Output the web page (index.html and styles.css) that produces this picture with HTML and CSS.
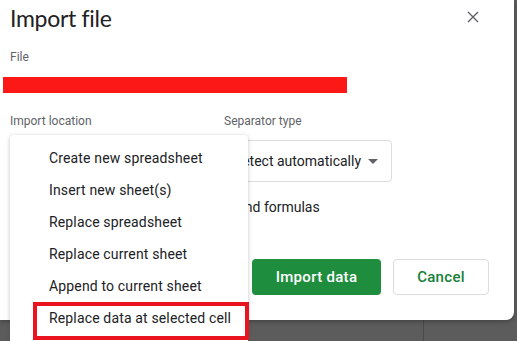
FILE: index.html
```html
<!DOCTYPE html>
<html lang="en">
<head>
    <meta charset="UTF-8">
    <meta name="viewport" content="width=device-width, initial-scale=1.0">
    <title>Import file</title>
    <link rel="stylesheet" href="styles.css">
</head>
<body>
    <div class="dialog">
        <div class="dialog-header">
            <h1>Import file</h1>
            <button class="close-btn" aria-label="Close">
                <svg width="12" height="12" viewBox="0 0 12 12">
                    <path d="M1 1L11 11M11 1L1 11" stroke="#5f6368" stroke-width="1.4" fill="none"/>
                </svg>
            </button>
        </div>

        <div class="field-label">File</div>
        <div class="file-name"></div>

        <div class="options">
            <div class="option">
                <div class="field-label">Import location</div>
                <!-- covered by the open menu -->
                <div class="select loc-select">
                    <span class="caret"></span>
                </div>
            </div>
            <div class="option">
                <div class="field-label">Separator type</div>
                <div class="select sep-select">
                    <span>Detect automatically</span>
                    <span class="caret"></span>
                </div>
            </div>
        </div>

        <label class="check-row">
            <span class="checkbox"></span>
            <span>Convert text to numbers, dates, and formulas</span>
        </label>

        <div class="actions">
            <button class="btn btn-primary">Import data</button>
            <button class="btn btn-secondary">Cancel</button>
        </div>

        <!-- open dropdown for import location -->
        <ul class="menu">
            <li>Create new spreadsheet</li>
            <li>Insert new sheet(s)</li>
            <li>Replace spreadsheet</li>
            <li>Replace current sheet</li>
            <li>Append to current sheet</li>
            <li>Replace data at selected cell</li>
        </ul>
        <div class="highlight"></div>
    </div>
</body>
</html>
```

FILE: styles.css
```css
html, body {
    margin: 0;
    height: 100%;
    overflow: hidden;
}
body {
    font-family: Roboto, 'Liberation Sans', Arial, sans-serif;
    color: #202124;
    background-color: #5c5c5c;
    background-image: linear-gradient(to right, transparent 423px, #4a4a4a 423px, #4a4a4a 424px, transparent 424px);
}
.dialog {
    position: relative;
    width: 514px;
    height: 320px;
    box-sizing: border-box;
    padding: 0 25px 0 10px;
    background-color: white;
    border-bottom-right-radius: 8px;
    box-shadow: 0 2px 4px rgba(0, 0, 0, 0.25);
}
.dialog-header {
    display: flex;
    justify-content: space-between;
    align-items: flex-start;
    height: 40px;
}
h1 {
    margin: 2px 0 0;
    font-family: Lato, 'Open Sans', sans-serif;
    font-size: 23px;
    font-weight: 400;
    line-height: 32px;
    letter-spacing: -0.3px;
}
.close-btn {
    margin: 11px 10px 0 0;
    padding: 0;
    border: none;
    background: none;
    width: 12px;
    height: 12px;
    display: flex;
}
.field-label {
    font-size: 12px;
    line-height: 16px;
    color: #5f6368;
}
.dialog > .field-label {
    margin-top: 9px;
}
.file-name {
    margin: 12px 0 0 -7px;
    width: 344px;
    height: 16px;
    background-color: #fd1818;
}
.options {
    display: flex;
    gap: 24px;
    margin-top: 20px;
}
.option {
    display: flex;
    flex-direction: column;
    gap: 11px;
}
.loc-select {
    width: 190px;
    justify-content: flex-end;
}
.select {
    display: flex;
    align-items: center;
    justify-content: space-between;
    box-sizing: border-box;
    height: 42px;
    padding: 0 13px 0 8px;
    border: 1px solid #dadce0;
    border-radius: 4px;
    font-size: 14px;
}
.sep-select {
    width: 168px;
}
.caret {
    width: 0;
    height: 0;
    border-left: 5px solid transparent;
    border-right: 5px solid transparent;
    border-top: 5px solid #5f6368;
}
.check-row {
    display: flex;
    align-items: center;
    gap: 12px;
    margin-top: 15px;
    font-size: 14px;
    line-height: 20px;
}
.checkbox {
    width: 14px;
    height: 14px;
    border: 2px solid #5f6368;
    border-radius: 2px;
}
.actions {
    display: flex;
    justify-content: flex-end;
    gap: 12px;
    margin-top: 42px;
}
.btn {
    height: 36px;
    border-radius: 4px;
    font-family: Roboto, sans-serif;
    font-size: 15px;
    font-weight: 500;
    letter-spacing: 0.3px;
    cursor: pointer;
}
.btn-primary {
    width: 129px;
    border: none;
    background-color: #1e8e3e;
    color: white;
}
.btn-secondary {
    width: 96px;
    border: 1px solid #dadce0;
    background-color: white;
    color: #188038;
}
.menu {
    position: absolute;
    left: 10px;
    top: 135px;
    width: 238px;
    margin: 0;
    padding: 7px 0 20px;
    list-style: none;
    background-color: white;
    border-radius: 4px;
    box-shadow: 0 1px 4px rgba(60, 64, 67, 0.3);
}
.menu li {
    height: 32px;
    line-height: 32px;
    padding-left: 39px;
    font-size: 14px;
    letter-spacing: 0.15px;
    color: #202124;
}
.highlight {
    position: absolute;
    left: 33px;
    top: 302px;
    width: 208px;
    height: 30px;
    border: 4px solid #ea1420;
}
```
